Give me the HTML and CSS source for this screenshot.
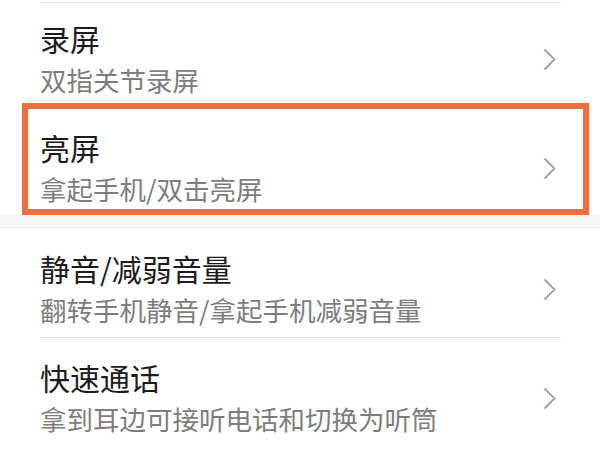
FILE: index.html
```html
<!DOCTYPE html>
<html lang="zh-CN">
<head>
<meta charset="utf-8">
<link rel="stylesheet" href="styles.css">
</head>
<body>
<div class="page">
  <div class="rule rule-top"></div>
  <div class="row row-1">
    <div class="text">
      <div class="title">录屏</div>
      <div class="sub">双指关节录屏</div>
    </div>
    <svg class="chev" width="13" height="23" viewBox="0 0 13 23"><polyline points="1.5,1.5 11.5,11.5 1.5,21.5" fill="none" stroke="#a0a0a0" stroke-width="1.8"/></svg>
  </div>
  <div class="row row-2 highlight">
    <div class="text">
      <div class="title">亮屏</div>
      <div class="sub">拿起手机/双击亮屏</div>
    </div>
    <svg class="chev" width="13" height="23" viewBox="0 0 13 23"><polyline points="1.5,1.5 11.5,11.5 1.5,21.5" fill="none" stroke="#a0a0a0" stroke-width="1.8"/></svg>
  </div>
  <div class="band"></div>
  <div class="row row-3">
    <div class="text">
      <div class="title">静音/减弱音量</div>
      <div class="sub">翻转手机静音/拿起手机减弱音量</div>
    </div>
    <svg class="chev" width="13" height="23" viewBox="0 0 13 23"><polyline points="1.5,1.5 11.5,11.5 1.5,21.5" fill="none" stroke="#a0a0a0" stroke-width="1.8"/></svg>
  </div>
  <div class="rule"></div>
  <div class="row row-4">
    <div class="text">
      <div class="title">快速通话</div>
      <div class="sub">拿到耳边可接听电话和切换为听筒</div>
    </div>
    <svg class="chev" width="13" height="23" viewBox="0 0 13 23"><polyline points="1.5,1.5 11.5,11.5 1.5,21.5" fill="none" stroke="#a0a0a0" stroke-width="1.8"/></svg>
  </div>
</div>
</body>
</html>
```
FILE: styles.css
```css
html, body {
  margin: 0;
  padding: 0;
  background: #ffffff;
}
.page {
  width: 600px;
  height: 450px;
  overflow: hidden;
  font-family: "Noto Sans CJK SC", "Noto Sans", sans-serif;
  background: #ffffff;
}
.rule {
  height: 1px;
  background: #e4e4e4;
  margin: 0 39px 0 40px;
}
.rule-top {
  margin-top: 2px;
}
.row {
  display: flex;
  align-items: center;
  justify-content: space-between;
  padding-left: 40px;
  padding-right: 44px;
}
.text {
  display: flex;
  flex-direction: column;
}
.title {
  font-size: 30px;
  line-height: 40px;
  color: #1b1b1b;
}
.sub {
  font-size: 26.5px;
  line-height: 40px;
  margin-top: 2px;
  color: #7d7d7d;
}
.chev {
  display: block;
  flex: none;
}
.row-1 {
  padding-top: 15px;
  padding-bottom: 3px;
}
.highlight {
  margin: 0 11px 0 22px;
  border: 6px solid #ef6e3e;
  padding: 18px 27px 0 12px;
}
.band {
  height: 14px;
  background: #f6f6f6;
}
.row-3 {
  padding-top: 19px;
  padding-bottom: 7px;
}
.row-4 {
  padding-top: 19px;
  padding-bottom: 10px;
}
```
